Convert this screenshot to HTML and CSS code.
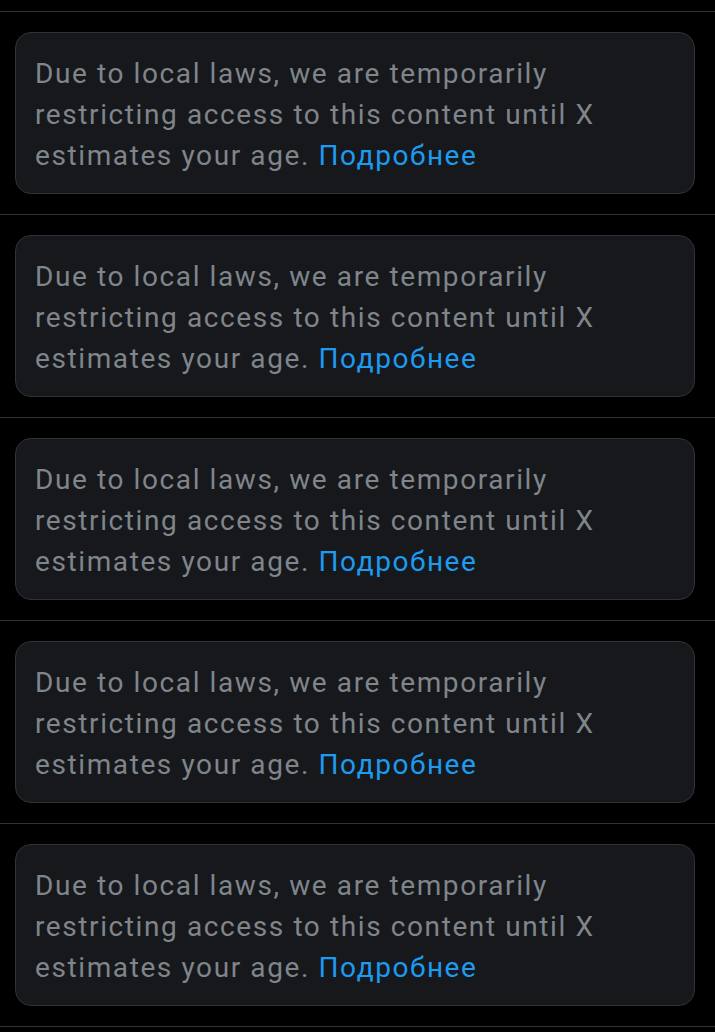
FILE: index.html
```html
<!DOCTYPE html>
<html>
<head>
<meta charset="utf-8">
<link rel="stylesheet" href="styles.css">
</head>
<body>
<main class="feed">
  <section class="item"><p class="notice">Due to local laws, we are temporarily restricting access to this content until X estimates your age. <a class="more" href="#">Подробнее</a></p></section>
  <section class="item"><p class="notice">Due to local laws, we are temporarily restricting access to this content until X estimates your age. <a class="more" href="#">Подробнее</a></p></section>
  <section class="item"><p class="notice">Due to local laws, we are temporarily restricting access to this content until X estimates your age. <a class="more" href="#">Подробнее</a></p></section>
  <section class="item"><p class="notice">Due to local laws, we are temporarily restricting access to this content until X estimates your age. <a class="more" href="#">Подробнее</a></p></section>
  <section class="item"><p class="notice">Due to local laws, we are temporarily restricting access to this content until X estimates your age. <a class="more" href="#">Подробнее</a></p></section>
</main>
</body>
</html>
```
FILE: styles.css
```css
html, body {
  margin: 0;
  padding: 0;
  background: #000;
}
.feed {
  padding-top: 11px;
}
.item {
  border-top: 1px solid #2f3336;
  padding: 20px 20px 20px 15px;
}
.item:last-child {
  border-bottom: 1px solid #2f3336;
}
.notice {
  margin: 0;
  background: #16181c;
  border: 1px solid #2f3336;
  border-radius: 16px;
  padding: 20px 19px 17px;
  font-family: Roboto, "Noto Sans", sans-serif;
  font-size: 28px;
  letter-spacing: 1.6px;
  line-height: 41px;
  color: #7f858b;
}
.more {
  color: #1d9bf0;
  text-decoration: none;
}
```
